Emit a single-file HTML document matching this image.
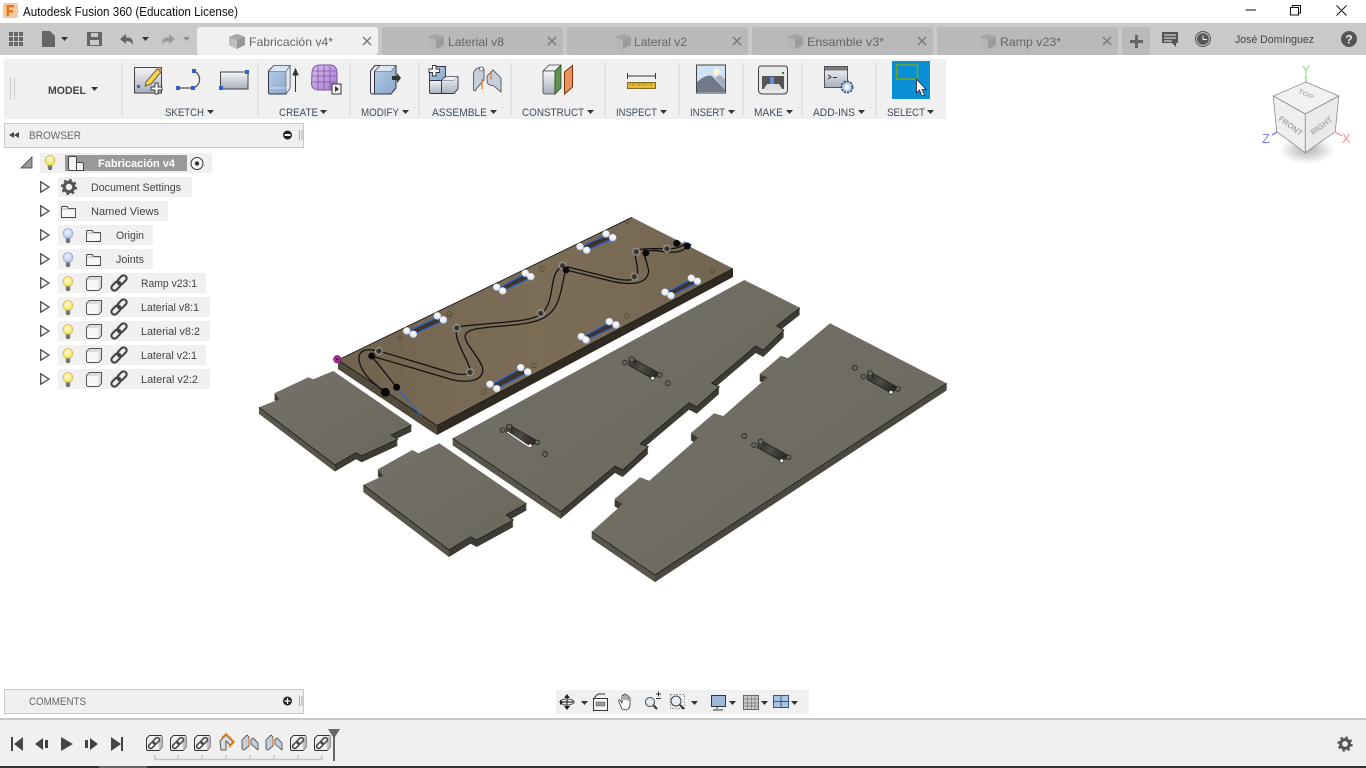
<!DOCTYPE html>
<html><head><meta charset="utf-8"><title>Autodesk Fusion 360</title>
<style>
html,body{margin:0;padding:0;background:#fff;overflow:hidden}
svg{display:block}
text{font-family:"Liberation Sans",sans-serif;font-size:11px;fill:#444}
.lb{fill:#3f4c5c}
.tb{font-size:12px;fill:#666}
</style></head><body>
<svg width="1366" height="768" viewBox="0 0 1366 768" xmlns="http://www.w3.org/2000/svg">
<defs>
<linearGradient id="gr" x1="0" y1="0" x2="0" y2="1"><stop offset="0" stop-color="#f4f5f7"/><stop offset="1" stop-color="#a9b0bc"/></linearGradient>
<linearGradient id="gb" x1="0" y1="0" x2="1" y2="1"><stop offset="0" stop-color="#b7cde6"/><stop offset="1" stop-color="#86a6cc"/></linearGradient>
<linearGradient id="gp" x1="0" y1="0" x2="1" y2="1"><stop offset="0" stop-color="#dcc0ee"/><stop offset="1" stop-color="#a57ad0"/></linearGradient>
<linearGradient id="plate" gradientUnits="objectBoundingBox" x1="0" y1="0" x2="1" y2="1"><stop offset="0" stop-color="#74716a"/><stop offset=".5" stop-color="#6f6c62"/><stop offset="1" stop-color="#6a675c"/></linearGradient>
<linearGradient id="brown" x1="0" y1="0" x2="1" y2="0"><stop offset="0" stop-color="#71644f"/><stop offset=".5" stop-color="#7c6d57"/><stop offset="1" stop-color="#736651"/></linearGradient>
<linearGradient id="slotg" x1="0" y1="0" x2="1" y2=".55"><stop offset="0" stop-color="#262522"/><stop offset=".5" stop-color="#4f4d46"/><stop offset="1" stop-color="#2a2926"/></linearGradient>
<radialGradient id="by" cx=".45" cy=".4" r=".65"><stop offset="0" stop-color="#fffde0"/><stop offset="1" stop-color="#f3d92f"/></radialGradient>
<radialGradient id="bb" cx=".45" cy=".4" r=".65"><stop offset="0" stop-color="#f4f6ff"/><stop offset="1" stop-color="#a3b8ee"/></radialGradient>
<radialGradient id="dot" cx=".5" cy=".35" r=".7"><stop offset="0" stop-color="#fff"/><stop offset=".65" stop-color="#e4e8f2"/><stop offset="1" stop-color="#7f9fe0"/></radialGradient>
<radialGradient id="cubeSh" cx=".5" cy=".5" r=".5"><stop offset="0" stop-color="#000" stop-opacity=".3"/><stop offset="1" stop-color="#000" stop-opacity="0"/></radialGradient>
<g id="tabcube"><path d="M0 3 8 0 16 3V11L8 15 0 11Z" fill="#888"/><path d="M0 3 8 6V15L0 11Z" fill="#b5b5b5"/><path d="M0 3 8 0 16 3 8 6Z" fill="#999"/></g>
<g id="x"><path d="M0 0 8 8M8 0 0 8" stroke="#777" stroke-width="1.4" fill="none"/></g>
<path id="arr" d="M0 0H7L3.5 4Z" fill="#333"/>
<g id="tri"><path d="M0.7 0.7 9 6 .7 11.3Z" fill="#f5f5f5" stroke="#444" stroke-width="1.2"/></g>
<g id="bulbY"><circle cx="0" cy="-2.500" r="5" fill="url(#by)" stroke="#c9b24a" stroke-width=".6"/><rect x="-2.200" y="2.400" width="4.400" height="3.600" fill="#777"/><rect x="-1.400" y="6" width="2.800" height="1" fill="#555"/></g>
<g id="bulbB"><circle cx="0" cy="-2.500" r="5" fill="url(#bb)" stroke="#8f9fd0" stroke-width=".6"/><rect x="-2.200" y="2.400" width="4.400" height="3.600" fill="#777"/><rect x="-1.400" y="6" width="2.800" height="1" fill="#555"/></g>
<g id="folder"><path d="M.5 1.500Q.5.500 1.500.500H6L7.500 2.500H14.500V11.500H.5Z" fill="#f8f8f8" stroke="#444" stroke-width=".9"/><path d="M.5 3H14.500" stroke="#888" stroke-width=".6"/></g>
<g id="cube"><path d="M3.500.5H15.500V11.500L12.500 14.500H2.500Q.5 14.500.5 12.500V3.500Z" fill="#f6f6f6" stroke="#555"/><path d="M4 1H15L12.500 4H1.500Z M12.500 4 15 1V11.300L12.500 14Z" fill="#dcdcdc"/></g>
<g id="link" transform="rotate(-45)" fill="none" stroke="#444" stroke-width="2.100"><rect x="-9.500" y="-3" width="10.500" height="6" rx="3"/><rect x="-1" y="-3" width="10.500" height="6" rx="3"/></g>
<g id="tlink"><path d="M3.500.5H14.500Q16 .5 16 2V12L13 15.500H2Q.5 15.500.5 14V3.500Z" fill="#f2f2f2" stroke="#333"/><path d="M13 4 16 .8V12L13 15.500Z" fill="#bbb"/><use href="#link" transform="translate(8 8) scale(.72)"/></g>
<g id="tjoint"><path d="M0 14V5L5 0 7 2V11L2 15Z" fill="#c4cedc" stroke="#444" stroke-width=".8"/><path d="M9 5 11 3 16 8V15L9 9Z" fill="#c4cedc" stroke="#444" stroke-width=".8"/><path d="M7 3V10" stroke="#ee7a10" stroke-width="1.300"/></g>
<g id="wdot"><circle r="3.700" fill="url(#dot)"/></g>
<g id="ring"><circle r="3.500" fill="#4e4b46" stroke="#a7a49c" stroke-width=".9"/><circle r="1.500" fill="#2e2c28"/></g>
<g id="slot">
<path d="M0-1.500 28.500 14.500 21 19.500-3 6Z" fill="url(#slotg)" stroke="#1f1e1b" stroke-width=".8"/>
<rect x="-2.500" y="0" width="5" height="5" fill="#4a4841"/>
<path d="M-2.500 0V5M2.500 0V5" stroke="#242320" stroke-width=".9"/>
<circle cx="0" cy="0" r="2.600" fill="#69665b" stroke="#2a2925" stroke-width=".9"/>
<circle cx="-6.700" cy="3.300" r="2.300" fill="#69665b" stroke="#2a2925" stroke-width=".9"/>
<circle cx="28" cy="15.700" r="2.300" fill="#69665b" stroke="#2a2925" stroke-width=".9"/>
<circle cx="21" cy="19" r="2" fill="#f7f7f7" stroke="#2a2925" stroke-width=".8"/>
</g>
<g id="hole"><circle r="2.500" fill="#69665b" stroke="#2a2925" stroke-width=".9"/></g>
<polygon id="pa" points="259,407.300 279.300,399.300 274.300,393.300 308.300,377.300 313.300,379.300 333.300,371 411.700,425 391,435 397.700,439.300 361.700,455.700 356,452.700 335,465"/>
<polygon id="pb" points="363.300,485 383.300,475.700 377.700,469.300 412.300,450 418.300,453.300 439.300,443.300 526.700,503.300 506,515 513.300,520 476.700,540 470.700,536.700 449,550"/>
<polygon id="pc" points="452.700,438.300 744.300,280 800,307.700 776.700,326 784,330 763.300,350 755.700,346 711.700,383.300 719.300,386.700 696.700,406.700 689,402.700 640,444 648.300,446.700 622.700,470 615,466 560.700,511.700"/>
<polygon id="pd" points="591.700,531.700 622.700,504 614.300,499.300 640,477.300 649.300,480.700 698.300,437.700 690.700,433.300 714,413.300 723.300,416 767.300,377.300 759.300,374.300 781,355.700 788,358.300 830,323.300 946.700,383.300 655,575"/>
</defs>

<rect width="1366" height="768" fill="#fff"/>

<!-- title bar -->
<rect x="3" y="3" width="15" height="15" rx="2" fill="#f3c9a0"/>
<path d="M6.500 5H14V7.500H9V10H13V12.500H9V16H6.500Z" fill="#e8761c"/>
<text x="23" y="16" textLength="215" lengthAdjust="spacingAndGlyphs" style="font-size:12.500px;fill:#111">Autodesk Fusion 360 (Education License)</text>
<path d="M1245.500 10H1256M1290.500 7.500H1298.500V15H1290.500ZM1292.500 7.500V5.500H1300.500V13H1298.500M1336.500 5.500 1346.500 15.500M1346.500 5.500 1336.500 15.500" stroke="#111" stroke-width="1" fill="none"/>

<!-- tab bar -->
<rect x="0" y="23" width="1366" height="32" fill="#c9c9c9"/>
<rect x="197" y="27" width="181" height="28" rx="3" fill="#f0f0f0"/>
<rect x="382" y="27" width="181" height="28" rx="3" fill="#b9b9b9"/>
<rect x="567" y="27" width="181" height="28" rx="3" fill="#b9b9b9"/>
<rect x="752" y="27" width="181" height="28" rx="3" fill="#b9b9b9"/>
<rect x="937" y="27" width="181" height="28" rx="3" fill="#b9b9b9"/>
<rect x="1122" y="27" width="28" height="28" rx="3" fill="#b9b9b9"/>
<path d="M9 32h4v4H9zM14 32h4v4h-4zM19 32h4v4h-4zM9 37h4v4H9zM14 37h4v4h-4zM19 37h4v4h-4zM9 42h4v4H9zM14 42h4v4h-4zM19 42h4v4h-4z" fill="#666"/>
<path d="M42 31H50L55 36V47H42Z" fill="#666"/><use href="#arr" x="61" y="37"/>
<path d="M87 32H102V46H87Z" fill="#666"/><rect x="91" y="33" width="7" height="4" fill="#c9c9c9"/><rect x="90" y="40" width="9" height="5" fill="#c9c9c9"/>
<path d="M120 39 126 34V37.500H129Q133 38 133 45 131 41 126 41V44Z" fill="#666"/><use href="#arr" x="142" y="37"/>
<path d="M175 39 169 34V37.500H166Q162 38 162 45 164 41 169 41V44Z" fill="#999"/><use href="#arr" x="183" y="37" opacity=".4"/>
<use href="#tabcube" x="229" y="34" style="opacity:.85"/>
<use href="#tabcube" x="428" y="34" style="opacity:.6"/>
<use href="#tabcube" x="615" y="34" style="opacity:.6"/>
<use href="#tabcube" x="787" y="34" style="opacity:.6"/>
<use href="#tabcube" x="980" y="34" style="opacity:.6"/>
<text class="tb" x="249" y="46" textLength="84" lengthAdjust="spacingAndGlyphs">Fabricación v4*</text>
<text class="tb" x="448" y="46" textLength="56" lengthAdjust="spacingAndGlyphs">Laterial v8</text>
<text class="tb" x="634" y="46" textLength="53" lengthAdjust="spacingAndGlyphs">Lateral v2</text>
<text class="tb" x="807" y="46" textLength="77" lengthAdjust="spacingAndGlyphs">Ensamble v3*</text>
<text class="tb" x="1000" y="46" textLength="61" lengthAdjust="spacingAndGlyphs">Ramp v23*</text>
<use href="#x" x="363" y="37"/><use href="#x" x="548" y="37"/><use href="#x" x="733" y="37"/><use href="#x" x="918" y="37"/><use href="#x" x="1103" y="37"/>
<path d="M1136.500 35V48M1130 41.500H1143" stroke="#666" stroke-width="3"/>
<path d="M1162 32H1178V43H1176V47L1172 43H1162Z" fill="#555"/><path d="M1164 35H1176M1164 38H1176M1164 41H1172" stroke="#eee"/>
<circle cx="1203" cy="39" r="7.500" fill="#bbb" stroke="#555" stroke-width="1"/><circle cx="1203" cy="39" r="5.800" fill="#555"/><path d="M1203 35.500V39.500H1207" stroke="#eee" fill="none"/>
<text x="1235" y="43" textLength="79" lengthAdjust="spacingAndGlyphs">José Domínguez</text>
<circle cx="1349" cy="39" r="8" fill="#555"/>
<text x="1349" y="43.500" text-anchor="middle" style="font-size:12px;font-weight:bold;fill:#eee">?</text>

<!-- toolbar -->
<rect x="4" y="59" width="942" height="60" fill="#f0f0f0"/>
<path d="M10.500 77V100M14.500 77V100" stroke="#ccc"/>
<path d="M122 63V116M258 63V116M350 63V116M419 63V116M511 63V116M605 63V116M679 63V116M743 63V116M802 63V116M876 63V116" stroke="#dcdcdc" stroke-width="1.500"/>
<text x="48" y="94" textLength="38" lengthAdjust="spacingAndGlyphs" style="font-weight:bold;fill:#444">MODEL</text><use href="#arr" x="91" y="87"/>
<g>
<text class="lb" x="165" y="116" textLength="39" lengthAdjust="spacingAndGlyphs">SKETCH</text><use href="#arr" x="207" y="110"/>
<text class="lb" x="279" y="116" textLength="39" lengthAdjust="spacingAndGlyphs">CREATE</text><use href="#arr" x="320" y="110"/>
<text class="lb" x="361" y="116" textLength="38" lengthAdjust="spacingAndGlyphs">MODIFY</text><use href="#arr" x="402" y="110"/>
<text class="lb" x="432" y="116" textLength="55" lengthAdjust="spacingAndGlyphs">ASSEMBLE</text><use href="#arr" x="490" y="110"/>
<text class="lb" x="522" y="116" textLength="62" lengthAdjust="spacingAndGlyphs">CONSTRUCT</text><use href="#arr" x="587" y="110"/>
<text class="lb" x="616" y="116" textLength="41" lengthAdjust="spacingAndGlyphs">INSPECT</text><use href="#arr" x="660" y="110"/>
<text class="lb" x="690" y="116" textLength="35" lengthAdjust="spacingAndGlyphs">INSERT</text><use href="#arr" x="728" y="110"/>
<text class="lb" x="754" y="116" textLength="29" lengthAdjust="spacingAndGlyphs">MAKE</text><use href="#arr" x="786" y="110"/>
<text class="lb" x="813" y="116" textLength="42" lengthAdjust="spacingAndGlyphs">ADD-INS</text><use href="#arr" x="858" y="110"/>
<text class="lb" x="887" y="116" textLength="38" lengthAdjust="spacingAndGlyphs">SELECT</text><use href="#arr" x="927" y="110"/>
</g>
<!-- sketch -->
<rect x="134.500" y="67.500" width="27" height="25.500" fill="url(#gr)" stroke="#444"/>
<rect x="137" y="85" width="3" height="3" fill="#3a6fc8"/>
<path d="M146 82 157 69 161 72 151 84 145 86Z" fill="#f6d24a" stroke="#444" stroke-width=".8"/><path d="M157 69 159 67 162 70 161 72Z" fill="#d98a50"/>
<path d="M155 83h3v4h4v3h-4v4h-3v-4h-4v-3h4z" fill="#fff" stroke="#333" stroke-width=".9"/>
<path d="M178 88H193A9 9 0 0 0 194 71" fill="none" stroke="#555" stroke-width="1.300"/>
<rect x="176" y="86" width="4" height="4" fill="#2f62c8"/><rect x="191" y="86" width="4" height="4" fill="#2f62c8"/><rect x="192" y="69" width="4" height="4" fill="#2f62c8"/>
<rect x="220.500" y="72" width="27.500" height="17" fill="url(#gr)" stroke="#444"/>
<rect x="245" y="70" width="4" height="4" fill="#2f62c8"/><rect x="219" y="86" width="4" height="4" fill="#2f62c8"/>
<!-- create -->
<path d="M268.500 71 274 65.500H290V88L286 94H270Q268.500 94 268.500 92Z" fill="url(#gb)" stroke="#334"/>
<path d="M274 65.500H290L286 71.500H268.500Z" fill="#dbe6f3" stroke="#556" stroke-width=".6"/><path d="M286 71.500V94L290 88V65.500Z" fill="#e2e8f0" stroke="#556" stroke-width=".6"/>
<path d="M269 88H286" stroke="#dde"/>
<path d="M295.500 92V72M293 75 295.500 69 298 75Z" stroke="#333" fill="#333"/>
<path d="M312 72Q313 65 320 65H331Q337 66 337 73V84Q337 90 330 90H319Q312 90 311.500 84Z" fill="url(#gp)" stroke="#7d55a8"/>
<path d="M312 76H337M312 82H337M318 66V90M324 66V90M330 66V90M313 71H336" stroke="#7d55a8" stroke-width=".8" fill="none"/>
<rect x="332" y="84" width="9" height="10" fill="#f5f5f5" stroke="#333"/><path d="M335 86 339 89 335 92Z" fill="#333"/>
<!-- modify -->
<path d="M370.500 71 375 65.500H385V94H373Q370.500 94 370.500 92Z" fill="#eef0f4" stroke="#334"/>
<path d="M374.500 71.500 380 65.500H396V88L391 94H374.500Z" fill="url(#gb)" stroke="#334"/>
<path d="M380 65.500H396L391 71.500H374.500Z" fill="#dbe6f3" stroke="#556" stroke-width=".6"/>
<path d="M392 76H397V73L401 78 397 83V80H392Z" fill="#333"/>
<!-- assemble -->
<path d="M429.500 71.500 434 66.500H445.500V76L441.500 80.500H429.500Z" fill="url(#gb)" stroke="#334" stroke-width=".9"/>
<path d="M429.500 80.500H441.500V93.500H431Q429.500 93.500 429.500 92Z" fill="url(#gr)" stroke="#334" stroke-width=".9"/>
<path d="M441.500 80.500 446 76.500H458V89L454 93.500H441.500Z" fill="url(#gr)" stroke="#334" stroke-width=".9"/>
<path d="M446 76.500H458L454 80.500H441.500Z" fill="#eceef2" stroke="#556" stroke-width=".5"/>
<path d="M432.500 65.500H436V69H439.500V72.500H436V76H432.500V72.500H429V69H432.500Z" fill="#fff" stroke="#333" stroke-width=".9"/>
<path d="M473.500 90V74Q474 70 477 68.500L481 67Q484 67 484 70V80L477 88 475 91Z" fill="#c6cfdc" stroke="#444" stroke-width=".8"/>
<circle cx="481.500" cy="69" r="2" fill="#eef0f4" stroke="#444" stroke-width=".6"/>
<path d="M487 76 493 70 501 78V92L494 86 490 85Q487 84 487 81Z" fill="#c6cfdc" stroke="#444" stroke-width=".8"/>
<path d="M482 79V89M491 71V80" stroke="#ee7a10" stroke-width="1.300"/>
<!-- construct -->
<path d="M543 71 549 65H561L555 71Z" fill="#eef0f4" stroke="#444" stroke-width=".8"/>
<path d="M543 71H555V94H545Q543 94 543 92Z" fill="url(#gr)" stroke="#444" stroke-width=".8"/>
<path d="M555 71 561 65.500V88L555 94Z" fill="#5d9550" stroke="#2c4a25" stroke-width=".8"/>
<path d="M564.500 72 572.500 65.500V87L564.500 94Z" fill="#e8945a" stroke="#7e2e0a"/>
<!-- inspect -->
<path d="M627.500 73V79M627.500 76H655.500M655.500 73V79" stroke="#333" fill="none"/>
<rect x="627.500" y="82.500" width="28" height="6" fill="#e6bb32" stroke="#7f6a20"/>
<path d="M630 83V85M633 83V86M636 83V85M639 83V86M642 83V85M645 83V86M648 83V85M651 83V86" stroke="#7f6a20" stroke-width=".7"/>
<!-- insert -->
<rect x="696.500" y="65" width="29" height="28" fill="#cfe3f5" stroke="#444"/>
<path d="M697 92V82Q706 74 712 76L725 90V92Z" fill="#717887"/><path d="M715 78 720 75 725 79V90Z" fill="#a4b0bd"/>
<circle cx="716.500" cy="72" r="3" fill="#fff6c0" stroke="#eee"/>
<!-- make -->
<path d="M758.500 69Q758.500 66 761 66H785Q787.500 66 787.500 69V90Q787.500 94 783 94H763Q758.500 94 758.500 90Z" fill="#e8e8e8" stroke="#444"/>
<path d="M762 76H784V89H762Z" fill="#555"/><path d="M763 90 767 84H779L783 90Z" fill="#ddd"/>
<rect x="770" y="77" width="4" height="7" fill="#5b8fd8"/>
<rect x="782" y="72" width="2" height="2" fill="#1d8a2b"/>
<!-- add-ins -->
<rect x="824.500" y="66.500" width="23" height="21" fill="url(#gr)" stroke="#555"/>
<rect x="825" y="67" width="22" height="3.500" fill="#777"/>
<path d="M828 75 831 77 828 79M833 77.500H837" stroke="#333" fill="none"/>
<circle cx="847" cy="87" r="5.500" fill="#c8d6ec" stroke="#3a5a8a" stroke-width="2" stroke-dasharray="2.200 1"/><circle cx="847" cy="87" r="2.300" fill="#fff"/>
<!-- select -->
<rect x="892" y="61" width="38" height="38" fill="#0a8fd6"/>
<rect x="896.500" y="65" width="21" height="14" fill="none" stroke="#6fa81e" stroke-width="1.500"/>
<path d="M916.500 79V93L919.500 90 922 96 924.500 95 922 89.500H926Z" fill="#fff" stroke="#222" stroke-width=".8"/>

<!-- browser -->
<rect x="4.500" y="123.500" width="299" height="24" fill="#f0f0f0" stroke="#c8c8c8"/>
<path d="M9 135 14 132V138ZM14 135 19 132V138Z" fill="#444"/>
<text x="29" y="139" textLength="52" lengthAdjust="spacingAndGlyphs" style="fill:#666">BROWSER</text>
<circle cx="287.500" cy="135" r="4.500" fill="#222"/><rect x="284.500" y="134" width="6" height="2" fill="#fff"/>
<path d="M299.500 130V140M302 130V140" stroke="#aaa"/>

<g fill="#f0f0f0">
<rect x="40" y="153" width="172" height="20"/>
<rect x="58" y="177" width="134" height="20"/>
<rect x="58" y="201" width="110" height="20"/>
<rect x="58" y="225" width="95" height="20"/>
<rect x="58" y="249" width="95" height="20"/>
<rect x="58" y="273" width="148" height="20"/>
<rect x="58" y="297" width="152" height="20"/>
<rect x="58" y="321" width="152" height="20"/>
<rect x="58" y="345" width="148" height="20"/>
<rect x="58" y="369" width="152" height="20"/>
</g>
<rect x="65" y="155" width="122" height="16" fill="#999"/>
<path d="M32 157V168H21Z" fill="#999" stroke="#444" stroke-width=".8"/>
<use href="#bulbY" x="50" y="163"/>
<path d="M70 156.500H75Q76.500 156.500 76.500 158V162.500H82Q83.500 162.500 83.500 164V170.500H70Q68.500 170.500 68.500 169V158Q68.500 156.500 70 156.500ZM76.500 162.500V170.500" fill="#f4f4f4" stroke="#444"/>
<text x="98" y="167" textLength="77" lengthAdjust="spacingAndGlyphs" style="font-weight:bold;fill:#fff">Fabricación v4</text>
<circle cx="197" cy="163.500" r="6" fill="#f6f6f6" stroke="#333"/><circle cx="197" cy="163.500" r="2.200" fill="#333"/>
<use href="#tri" x="40" y="181"/><use href="#tri" x="40" y="205"/><use href="#tri" x="40" y="229"/><use href="#tri" x="40" y="253"/><use href="#tri" x="40" y="277"/><use href="#tri" x="40" y="301"/><use href="#tri" x="40" y="325"/><use href="#tri" x="40" y="349"/><use href="#tri" x="40" y="373"/>
<circle cx="69" cy="187" r="4.800" fill="none" stroke="#555" stroke-width="3.200"/>
<circle cx="69" cy="187" r="7" fill="none" stroke="#555" stroke-width="2.200" stroke-dasharray="2.500 3"/>
<use href="#folder" x="61" y="206"/><use href="#folder" x="86" y="230"/><use href="#folder" x="86" y="254"/>
<use href="#bulbB" x="68" y="236"/><use href="#bulbB" x="68" y="260"/>
<use href="#bulbY" x="68" y="284"/><use href="#bulbY" x="68" y="308"/><use href="#bulbY" x="68" y="332"/><use href="#bulbY" x="68" y="356"/><use href="#bulbY" x="68" y="380"/>
<use href="#cube" x="86" y="276"/><use href="#cube" x="86" y="300"/><use href="#cube" x="86" y="324"/><use href="#cube" x="86" y="348"/><use href="#cube" x="86" y="372"/>
<use href="#link" transform="translate(119 283)"/><use href="#link" transform="translate(119 307)"/><use href="#link" transform="translate(119 331)"/><use href="#link" transform="translate(119 355)"/><use href="#link" transform="translate(119 379)"/>
<text x="91" y="191" textLength="90" lengthAdjust="spacingAndGlyphs">Document Settings</text>
<text x="91" y="215" textLength="68" lengthAdjust="spacingAndGlyphs">Named Views</text>
<text x="116" y="239" textLength="28" lengthAdjust="spacingAndGlyphs">Origin</text>
<text x="116" y="263" textLength="28" lengthAdjust="spacingAndGlyphs">Joints</text>
<text x="141" y="287" textLength="56" lengthAdjust="spacingAndGlyphs">Ramp v23:1</text>
<text x="141" y="311" textLength="58" lengthAdjust="spacingAndGlyphs">Laterial v8:1</text>
<text x="141" y="335" textLength="59" lengthAdjust="spacingAndGlyphs">Laterial v8:2</text>
<text x="141" y="359" textLength="56" lengthAdjust="spacingAndGlyphs">Lateral v2:1</text>
<text x="141" y="383" textLength="57" lengthAdjust="spacingAndGlyphs">Lateral v2:2</text>

<!-- viewcube -->
<ellipse cx="1307" cy="150" rx="28" ry="14" fill="url(#cubeSh)"/>
<path d="M1306 82 1338.700 96 1305.300 114 1273.300 96Z" fill="#f1f1f1" stroke="#8c8c8c" stroke-width=".8"/>
<path d="M1273.300 96 1305.300 114V152.700L1276.700 131.700Z" fill="#efefef" stroke="#8c8c8c" stroke-width=".8"/>
<path d="M1338.700 96 1305.300 114V152.700L1335.300 131.700Z" fill="#eaeaea" stroke="#8c8c8c" stroke-width=".8"/>
<text transform="translate(1305 96) rotate(26) scale(1 .8)" text-anchor="middle" style="font-size:8px;font-weight:bold;fill:#b4b4b4">TOP</text>
<text transform="translate(1289 128) rotate(36)" text-anchor="middle" style="font-size:8px;font-weight:bold;fill:#a8a8a8">FRONT</text>
<text transform="translate(1323 128) rotate(-36)" text-anchor="middle" style="font-size:8px;font-weight:bold;fill:#a8a8a8">RIGHT</text>
<path d="M1306 75V82" stroke="#7fe87f" stroke-width="1.500"/>
<text x="1306" y="74" text-anchor="middle" style="font-size:12px;fill:#7ee87e">Y</text>
<path d="M1277 132 1272 135" stroke="#7f7fff" stroke-width="1.500"/>
<text x="1262" y="143" style="font-size:13px;fill:#7f7fff">Z</text>
<path d="M1335 132 1342 136" stroke="#ff9a9a" stroke-width="1.500"/>
<text x="1342" y="143" style="font-size:13px;fill:#ff8f8f">X</text>

<!-- small plate 1 -->
<g fill="#3d3b35"><use href="#pa" y="1"/><use href="#pa" y="2"/><use href="#pa" y="3"/><use href="#pa" y="4"/><use href="#pa" y="5"/><use href="#pa" y="6"/><use href="#pa" y="6.500"/></g>
<path d="M259 407.300V413.800L335 471.500V465Z" fill="#57554c"/>
<use href="#pa" fill="url(#plate)"/>
<path d="M259 407.300 335 465 356 452.700 361.700 455.700 397.700 439.300 391 435 411.700 425" fill="none" stroke="#1f1e1b" stroke-width=".8"/>
<!-- small plate 2 -->
<g fill="#3d3b35"><use href="#pb" y="1"/><use href="#pb" y="2"/><use href="#pb" y="3"/><use href="#pb" y="4"/><use href="#pb" y="5"/><use href="#pb" y="6"/><use href="#pb" y="7"/></g>
<path d="M363.300 485V492L449 557V550Z" fill="#57554c"/>
<use href="#pb" fill="url(#plate)"/>
<path d="M363.300 485 449 550 470.700 536.700 476.700 540 513.300 520 506 515 526.700 503.300" fill="none" stroke="#1f1e1b" stroke-width=".8"/>
<!-- long plate -->
<g fill="#3d3b35"><use href="#pc" y="1"/><use href="#pc" y="2"/><use href="#pc" y="3"/><use href="#pc" y="4"/><use href="#pc" y="5"/><use href="#pc" y="6"/><use href="#pc" y="7"/></g>
<path d="M452.700 438.300V445.300L560.700 518.700V511.700Z" fill="#57554c"/>
<use href="#pc" fill="url(#plate)"/>
<path d="M452.700 438.300 560.700 511.700 615 466 622.700 470 648.300 446.700 640 444 689 402.700 696.700 406.700 719.300 386.700 711.700 383.300 755.700 346 763.300 350 784 330 776.700 326 800 307.700" fill="none" stroke="#1f1e1b" stroke-width=".8"/>
<use href="#slot" x="631.700" y="359.300"/><use href="#slot" x="509.300" y="426.700"/>
<path d="M507 432 530 447" stroke="#fff" stroke-width="1.300"/>
<use href="#hole" x="667.700" y="383.300"/><use href="#hole" x="545" y="454"/>
<!-- large plate -->
<g fill="#3d3b35"><use href="#pd" y="1"/><use href="#pd" y="2"/><use href="#pd" y="3"/><use href="#pd" y="4"/><use href="#pd" y="5"/><use href="#pd" y="6"/><use href="#pd" y="7"/></g>
<path d="M591.700 531.700V538.700L655 582V575Z" fill="#57554c"/>
<path d="M655 575V582L946.700 390.300V383.300Z" fill="#4a4841"/>
<use href="#pd" fill="url(#plate)"/>
<path d="M591.700 531.700 655 575 946.700 383.300" fill="none" stroke="#1f1e1b" stroke-width=".8"/>
<use href="#slot" x="870" y="373.300"/><use href="#slot" x="760.700" y="441.700"/>
<use href="#hole" x="854.700" y="367.700"/><use href="#hole" x="744.300" y="436"/>

<!-- main brown plate -->
<path d="M338 360V369L437 435 733 277V268.500L437 425.500Z" fill="#2f2b23"/>
<path d="M338 360V369L437 435V425.500Z" fill="#524a3a"/>
<path d="M338 360 632 217.300 733 268.500 437 425.500Z" fill="url(#brown)"/>
<path d="M338 360 632 217.300M733 268.500 437 425.500 338 360" fill="none" stroke="#1b1a16" stroke-width=".9"/>
<g transform="translate(330 210) scale(.33333)">
<g fill="none" stroke="#1e1c18" stroke-width="1.300">
<circle cx="210" cy="385" r="7"/><circle cx="358" cy="312" r="7"/><circle cx="636" cy="177" r="7"/><circle cx="892" cy="34" r="6"/><circle cx="1147" cy="183" r="7"/><circle cx="890" cy="318" r="7"/><circle cx="612" cy="466" r="7"/><circle cx="461" cy="546" r="7"/>
</g>
<g fill="#3f3426" stroke="#2a251c" stroke-width="1.500">
<path d="M240 362 322 322 335 332 250 372Z"/>
<path d="M510 232 586 195 600 205 518 243Z"/>
<path d="M760 108 830 80 844 88 770 121Z"/>
<path d="M1013 245 1084 210 1098 218 1023 257Z"/>
<path d="M764 378 838 340 852 348 768 390Z"/>
<path d="M490 522 572 480 590 490 500 536Z"/>
</g>
<g fill="none" stroke="#111" stroke-width="3.800">
<path d="M165 547C125 515 95 490 88 455 82 425 100 412 147 423L350 484C390 498 425 496 421 480 415 450 370 390 380 355 388 345 450 345 540 335 600 328 640 325 655 280 672 240 660 190 698 167L850 205C890 213 915 215 922 190 927 165 905 130 925 120 950 112 985 118 1011 116 1030 117 1050 115 1065 100"/>
<path d="M125 438 200 532"/>
<path d="M125 438 370 510C420 520 462 510 458 475 450 440 395 395 407 372 415 355 470 352 540 346 610 340 665 330 685 270 697 240 700 200 708 180L850 215C900 225 950 225 956 185 955 160 938 140 947 129 960 115 985 124 1011 126 1040 128 1060 125 1072 108"/>
</g>
<path d="M200 532 275 620" stroke="#2060e0" stroke-width="3" fill="none"/>
<path d="M1060 95 1085 105" stroke="#2060e0" stroke-width="3" fill="none"/>
<g stroke="#2060e0" stroke-width="3.400" fill="none">
<path d="M240 362 322 322M250 373 338 333"/>
<path d="M510 232 586 192M518 243 602 203"/>
<path d="M760 108 828 75M770 121 848 85"/>
<path d="M1015 245 1084 208M1023 257 1102 217"/>
<path d="M764 378 838 338M768 390 858 348"/>
<path d="M490 522 572 476M500 536 593 488"/>
</g>
<g transform="scale(3)">
<use href="#wdot" x="76.700" y="121"/><use href="#wdot" x="83.300" y="124.300"/><use href="#wdot" x="107.300" y="106"/><use href="#wdot" x="113.300" y="110"/>
<use href="#wdot" x="166.700" y="77.300"/><use href="#wdot" x="172.700" y="81"/><use href="#wdot" x="195.300" y="63.300"/><use href="#wdot" x="200.700" y="66.700"/>
<use href="#wdot" x="250" y="36.700"/><use href="#wdot" x="256.700" y="40.300"/><use href="#wdot" x="276" y="24"/><use href="#wdot" x="282.700" y="27.700"/>
<use href="#wdot" x="335" y="82.300"/><use href="#wdot" x="341" y="85.700"/><use href="#wdot" x="361.300" y="68.300"/><use href="#wdot" x="367.300" y="71.300"/>
<use href="#wdot" x="251.300" y="126.700"/><use href="#wdot" x="256" y="130"/><use href="#wdot" x="279.300" y="111.700"/><use href="#wdot" x="286" y="115"/>
<use href="#wdot" x="160" y="174.300"/><use href="#wdot" x="166.700" y="178.700"/><use href="#wdot" x="190.700" y="157.700"/><use href="#wdot" x="197.700" y="162"/>
<use href="#ring" x="49" y="141"/><use href="#ring" x="140" y="162.300"/><use href="#ring" x="126.700" y="118"/><use href="#ring" x="210.700" y="103.300"/><use href="#ring" x="232.700" y="55.700"/><use href="#ring" x="304.300" y="66.700"/><use href="#ring" x="306.300" y="41.700"/><use href="#ring" x="337" y="38.700"/>
<circle cx="41.700" cy="146" r="3.500" fill="#0a0a0a"/><circle cx="55.300" cy="182.300" r="4.500" fill="#0a0a0a"/><circle cx="66.700" cy="177.300" r="3.500" fill="#0a0a0a"/>
<circle cx="236" cy="60" r="3.300" fill="#0a0a0a"/><circle cx="315.700" cy="43" r="3.500" fill="#0a0a0a"/><circle cx="346.700" cy="33.300" r="3.500" fill="#0a0a0a"/><circle cx="357.300" cy="36" r="3.500" fill="#0a0a0a"/>
<circle cx="7.300" cy="149.300" r="3.700" fill="#b02a9c" stroke="#6e1a64" stroke-width=".7"/><circle cx="7.300" cy="149.300" r="1.200" fill="#3a0d34"/>
</g>
</g>

<!-- comments -->
<rect x="4.500" y="689.500" width="299" height="24" fill="#f0f0f0" stroke="#c8c8c8"/>
<text x="29" y="705" textLength="57" lengthAdjust="spacingAndGlyphs" style="fill:#666">COMMENTS</text>
<circle cx="287.500" cy="701" r="4.500" fill="#222"/><path d="M284.500 701H290.500M287.500 698V704" stroke="#fff" stroke-width="1.300"/>
<path d="M299.500 696V706M302 696V706" stroke="#aaa"/>

<!-- nav bar -->
<rect x="556" y="690" width="253" height="24" fill="#f0f0f0"/>
<path d="M567 695V709M561 702H574" stroke="#333" stroke-width="1.200"/>
<ellipse cx="567" cy="702" rx="7" ry="3" fill="none" stroke="#555"/><path d="M564 698 567 694 570 698ZM564 706 567 710 570 706ZM560 700V705L563 702.500Z" fill="#222"/>
<use href="#arr" x="581" y="701"/>
<rect x="593.500" y="698.500" width="14" height="12" fill="#f6f6f6" stroke="#333"/><rect x="596" y="702" width="9" height="4" fill="#999" stroke="#555" stroke-width=".5"/><path d="M594 698 598 694H605" stroke="#333" fill="none"/>
<path d="M622 709 619 702Q618 699 620 700L622 703V696Q623 694 624 696V700 694.500Q625 693 626 695V700 695.500Q627 694 628 696V701 698Q629 696 630 698V704Q630 709 626 710Z" fill="#fff" stroke="#333" stroke-width=".8"/>
<circle cx="650" cy="702" r="4.500" fill="#e3ecf6" stroke="#444"/><path d="M653.500 705.500 657 709" stroke="#333" stroke-width="2"/><path d="M656 694H661M658.500 691.500V696.500M656 698.500H661" stroke="#333"/>
<rect x="670.500" y="694.500" width="14" height="14" fill="none" stroke="#888" stroke-dasharray="1.500 1.500"/><circle cx="676" cy="701" r="5" fill="#e3ecf6" stroke="#444"/><path d="M680 705 684 709" stroke="#333" stroke-width="2"/>
<use href="#arr" x="691" y="701"/>
<rect x="711.500" y="695.500" width="14" height="11" fill="#9cb9da" stroke="#333"/><path d="M717 707V709M713 710H723" stroke="#333"/><use href="#arr" x="729" y="701"/>
<rect x="743.500" y="695.500" width="15" height="14" fill="#ccc" stroke="#666"/><path d="M747.500 696V709M751.500 696V709M755 696V709M744 699H758M744 703H758M744 706H758" stroke="#777" stroke-width=".7"/><use href="#arr" x="761" y="701"/>
<rect x="773.500" y="695.500" width="15" height="12" fill="#a8c4e4" stroke="#34558a"/><path d="M781 696V707M774 701.500H788" stroke="#34558a"/><use href="#arr" x="791" y="701"/>

<!-- timeline -->
<rect x="0" y="718" width="1366" height="2" fill="#c8c8c8"/>
<rect x="0" y="720" width="1366" height="46" fill="#f0f0f0"/>
<rect x="0" y="766" width="1366" height="2" fill="#333"/>
<rect x="99" y="766" width="48" height="2" fill="#666"/>
<path d="M11 737H13V751H11ZM23 737V751L14 744Z" fill="#444"/>
<path d="M35 744 43 738V750ZM45 740H48V748H45Z" fill="#444"/>
<path d="M61 737 73 744 61 751Z" fill="#444"/>
<path d="M85 740H88V748H85ZM90 738 98 744 90 750Z" fill="#444"/>
<path d="M111 737 121 744 111 751ZM121 737H123V751H121Z" fill="#444"/>
<use href="#tlink" x="146" y="735"/><use href="#tlink" x="170" y="735"/><use href="#tlink" x="194" y="735"/>
<path d="M220 741 226 735 233 742 230 745 226 741V750H221Z" fill="#d8dde6" stroke="#333" stroke-width=".8"/><path d="M222 738 226 734 234 742 229 747" fill="none" stroke="#ee7a10" stroke-width="1.700"/>
<use href="#tjoint" x="242" y="735"/><use href="#tjoint" x="266" y="735"/>
<use href="#tlink" x="290" y="735"/><use href="#tlink" x="314" y="735"/>
<path d="M155 755V759.500H322V755M178 755V759M202 755V759M226 755V759M250 755V759M274 755V759M298 755V759" fill="none" stroke="#c4c4c4" stroke-width="1.500"/>
<path d="M328 729H340L335 737V761H333V737Z" fill="#666"/>
<circle cx="1345" cy="744" r="4.400" fill="none" stroke="#555" stroke-width="3"/>
<circle cx="1345" cy="744" r="6.700" fill="none" stroke="#555" stroke-width="2" stroke-dasharray="2.500 2.800"/>
</svg>
</body></html>
